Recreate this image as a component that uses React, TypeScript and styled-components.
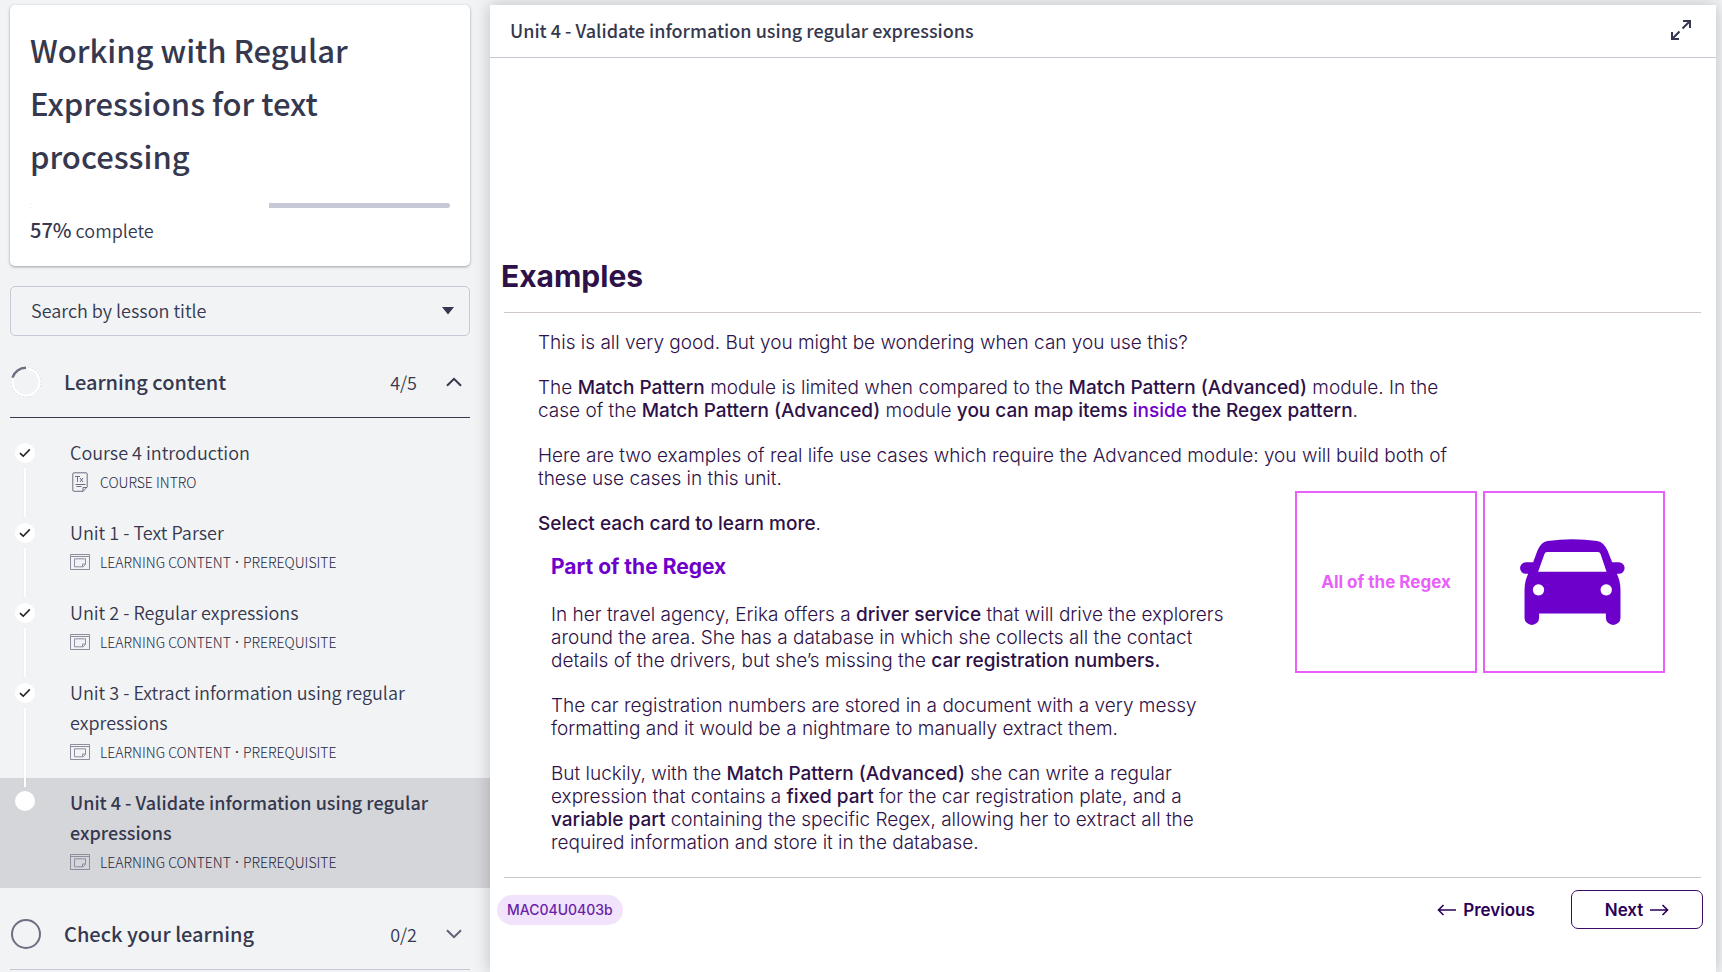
import React from "react";
import styled, { createGlobalStyle } from "styled-components";

const GlobalStyle = createGlobalStyle`
  *, *::before, *::after { box-sizing: border-box; }
  body {
    margin: 0;
    background: #f1f3f5;
    color: #35384e;
    font-family: "Noto Sans CJK SC", "Source Sans Pro", sans-serif;
  }
  h1, h2, h3, p, ul { margin: 0; padding: 0; }
  button { font: inherit; color: inherit; background: none; border: 0; padding: 0; cursor: pointer; }
`;

const Page = styled.div`
  display: grid;
  grid-template-columns: 490px minmax(0, 1fr);
  min-height: 100vh;
  padding: 5px 6px 0 0;
  overflow: hidden;
`;

const Sidebar = styled.nav`
  min-width: 0;
`;

const CourseCard = styled.section`
  margin: 0 20px 20px 10px;
  padding: 18px 20px 21px;
  background: #fff;
  border-radius: 5px;
  box-shadow: 0 1px 3px rgba(0, 0, 0, 0.35);
`;

const CourseTitle = styled.h1`
  font-size: 31px;
  line-height: 53px;
  font-weight: 500;
`;

const Track = styled.div`
  height: 5px;
  margin: 21px 0 7px;
  border-radius: 3px;
  background: #c7cad6;
  overflow: hidden;
`;

const Fill = styled.div`
  height: 100%;
  background: #fff;
`;

const Complete = styled.p`
  font-size: 18px;
  line-height: 30px;
  font-weight: 350;

  strong { font-size: 20px; font-weight: 500; }
`;

const SearchField = styled.div`
  display: grid;
  align-items: center;
  margin: 0 20px 10px 10px;

  > * { grid-area: 1 / 1; }
  svg { justify-self: end; margin-right: 16px; pointer-events: none; }
`;

const SearchSelect = styled.select`
  appearance: none;
  width: 100%;
  height: 50px;
  padding: 0 40px 3px 20px;
  border: 1px solid #c7cad6;
  border-radius: 5px;
  background: transparent;
  color: #35384e;
  font-family: inherit;
  font-size: 18px;
  font-weight: 350;
`;

const SectionHeader = styled.button<{ $open?: boolean }>`
  display: flex;
  align-items: center;
  width: calc(100% - 30px);
  height: 72px;
  margin: 0 20px 0 10px;
  padding-right: 8px;
  border-bottom: 1px solid ${(p) => (p.$open ? "#35384e" : "#c3cad6")};
  text-align: left;
`;

const SectionName = styled.span`
  flex: 1;
  margin-left: 22px;
  font-size: 20px;
  line-height: 30px;
  font-weight: 500;
`;

const SectionCount = styled.span`
  margin-right: 29px;
  font-size: 18px;
  line-height: 30px;
  font-weight: 350;
`;

const Lessons = styled.ul`
  list-style: none;
  padding: 10px 0;
`;

const Lesson = styled.li<{ $current?: boolean }>`
  display: flex;
  background: ${(p) => (p.$current ? "#d5d6da" : "transparent")};
`;

const Rail = styled.div<{ $current?: boolean }>`
  display: flex;
  flex-direction: column;
  align-items: center;
  gap: 5px;
  width: 50px;
  padding-top: ${(p) => (p.$current ? 13 : 15)}px;
`;

const Dot = styled.span`
  display: grid;
  place-items: center;
  flex: none;
  width: 20px;
  height: 20px;
  border-radius: 50%;
  background: #fff;
`;

const Connector = styled.span`
  flex: 1;
  width: 2px;
  margin-bottom: -9px;
  background: #fff;
  box-shadow: 0 0 1px rgba(53, 56, 78, 0.2);
`;

const LessonLink = styled.a`
  flex: 1;
  padding: 9px 50px 11px 20px;
  color: #35384e;
  text-decoration: none;
`;

const LessonTitle = styled.span<{ $current?: boolean }>`
  display: block;
  font-size: 18px;
  line-height: 30px;
  font-weight: ${(p) => (p.$current ? 500 : 350)};
`;

const Meta = styled.span`
  display: flex;
  align-items: center;
  font-size: 14px;
  line-height: 30px;
  font-weight: 300;
  color: #23263c;

  svg { width: 20px; margin-right: 10px; }
`;

const Separator = styled.span`
  width: 12px;
  font-family: Roboto, sans-serif;
  font-weight: 500;
  text-align: center;
`;

const Main = styled.main`
  min-width: 0;
  background: #fff;
  box-shadow: 0 0 16px rgba(0, 0, 0, 0.22);
`;

const TopBar = styled.header`
  display: flex;
  align-items: center;
  justify-content: space-between;
  height: 53px;
  padding: 0 25px 2px 20px;
  border-bottom: 1px solid #c7c8d2;
`;

const TopTitle = styled.h2`
  font-size: 18px;
  line-height: 30px;
  font-weight: 500;
`;

const IconButton = styled.button`
  display: flex;
`;

const Slide = styled.article`
  padding: 198px 13px 40px 7px;
  font-family: Inter, sans-serif;
  color: #2d1148;
`;

const SlideTitle = styled.h2`
  padding: 0 0 16px 4px;
  font-size: 30px;
  line-height: 40px;
  font-weight: 700;
`;

const Rule = styled.hr`
  height: 1px;
  margin: 0 2px 0 7px;
  border: 0;
  background: #cfc6cb;
`;

const Body = styled.div`
  padding: 18px 38px 23px 41px;
  font-size: 19px;
  line-height: 23px;
  font-weight: 280;

  p + p { margin-top: 22px; }
  strong { font-weight: 550; }
`;

const Intro = styled.div`
  max-width: 930px;
`;

const Split = styled.div`
  display: flex;
  align-items: flex-start;
  justify-content: space-between;
  gap: 12px;
`;

const Story = styled.section`
  max-width: 703px;
  padding-top: 22px;
`;

const Detail = styled.div`
  padding-left: 13px;
`;

const DetailTitle = styled.h3`
  margin: 18px 0 22px;
  font-size: 21px;
  line-height: 28px;
  font-weight: 700;
  color: #6e00cc;
`;

const Accent = styled.span`
  color: #6e00cc;
`;

const Cards = styled.div`
  display: flex;
  gap: 6px;
  padding-top: 1px;
`;

const FlipCard = styled.button`
  display: grid;
  place-items: center;
  width: 182px;
  height: 182px;
  border: 2px solid #e95ffa;
  color: #e95ffa;
  font-size: 17px;
  font-weight: 700;
`;

const Footer = styled.footer`
  display: flex;
  align-items: center;
  padding-top: 12px;
`;

const Code = styled.span`
  margin-right: auto;
  padding: 0 10px;
  border-radius: 15px;
  background: #f0e3fb;
  color: #6a1fa8;
  font-size: 14px;
  line-height: 30px;
  font-weight: 500;
`;

const NavButton = styled.button<{ $outlined?: boolean }>`
  display: flex;
  align-items: center;
  justify-content: center;
  gap: 7px;
  height: 39px;
  min-width: 132px;
  border: 1px solid ${(p) => (p.$outlined ? "#3b0a66" : "transparent")};
  border-radius: 7px;
  color: #2b0057;
  font-size: 17px;
  font-weight: 600;

  & + & { margin-left: 19px; }
`;

const Check = () => (
  <svg width="12" height="10" viewBox="0 0 12 10" fill="none" stroke="#222" strokeWidth="1.6">
    <path d="M1 5.2 4.2 8.2 10.8 1.4" />
  </svg>
);

const Chevron = ({ up }: { up?: boolean }) => (
  <svg width="16" height="10" viewBox="0 0 16 10" fill="none" stroke={up ? "#35384e" : "#5d6076"} strokeWidth="2">
    <path d={up ? "M1 8.8 8 1.8 15 8.8" : "M1 1.2 8 8.2 15 1.2"} />
  </svg>
);

const Ring = ({ started }: { started?: boolean }) => (
  <svg width="32" height="32" viewBox="0 0 32 32" fill="none" strokeWidth="2">
    {started ? (
      <>
        <circle cx="16" cy="16" r="14.6" stroke="#a9abb8" strokeWidth="0.8" strokeDasharray="2 1.5" />
        <circle cx="16" cy="16" r="13.6" stroke="#fff" strokeWidth="2.4" />
        <path d="M2.5 11.6A14.2 14.2 0 0 1 16 1.8" stroke="#6c6f82" strokeWidth="2.4" />
      </>
    ) : (
      <circle cx="16" cy="16" r="14" stroke="#6c6f82" />
    )}
  </svg>
);

const TextDocIcon = () => (
  <svg height="20" viewBox="0 0 20 20" fill="none" stroke="#6c6f82">
    <path d="M4 .8h12a1.2 1.2 0 0 1 1.2 1.2v13L13 19.3H4A1.2 1.2 0 0 1 2.8 18V2A1.2 1.2 0 0 1 4 .8Z" />
    <path d="M17 15.500h-4v4M5 4.500h5M7.500 4.500V10M10 6l3 4M13 6l-3 4M5.500 12.500h10M6.500 14.500h5" />
  </svg>
);

const WindowIcon = () => (
  <svg height="16" viewBox="0 0 20 16" fill="none" stroke="#8b8e9d">
    <path d="M.5.5h19v15H.5ZM.5 2.500h19M15.500 10.500V4.800H4.500v8H13ZM12.500 12.500v-2.500h3" />
  </svg>
);

const Arrow = ({ left }: { left?: boolean }) => (
  <svg width="19" height="12" viewBox="0 0 19 12" fill="none" stroke="#2b0057" strokeWidth="1.6">
    <path d={left ? "M19 6H1.500M6.500 1 1.500 6l5 5" : "M0 6h17.500M12.500 1l5 5-5 5"} />
  </svg>
);

const Expand = () => (
  <svg width="20" height="20" viewBox="0 0 20 20" fill="none" stroke="#35384e" strokeWidth="2">
    <path d="M12 1h7v7M19 1l-7.500 7.500M8 19H1v-7M1 19l7.500-7.500" />
  </svg>
);

const Car = () => (
  <svg width="108" height="86" viewBox="780 207 324 259" fill="#6e00cc">
    <path
      fillRule="evenodd"
      d="M797 277h22L832 242Q842 217 862 213Q937 202 1012 213Q1032 217 1043 242L1057 277h20a17 17 0 0 1 0 35h-6Q1082 334 1082 360V444a22 22 0 0 1-44 0V431H837v13a22 22 0 0 1-44 0V360Q793 334 804 312h-7a17 17 0 0 1 0-35ZM861 246Q855 246 853 252L834 306H1040L1022 252Q1020 246 1014 246ZM835 343a17 17 0 1 0 .1 0ZM1039 343a17 17 0 1 0 .1 0Z"
    />
  </svg>
);

type LessonItem = { title: string; tags: string[]; doc?: boolean; current?: boolean };

const lessons: LessonItem[] = [
  { title: "Course 4 introduction", tags: ["COURSE INTRO"], doc: true },
  { title: "Unit 1 - Text Parser", tags: ["LEARNING CONTENT", "PREREQUISITE"] },
  { title: "Unit 2 - Regular expressions", tags: ["LEARNING CONTENT", "PREREQUISITE"] },
  { title: "Unit 3 - Extract information using regular expressions", tags: ["LEARNING CONTENT", "PREREQUISITE"] },
  {
    title: "Unit 4 - Validate information using regular expressions",
    tags: ["LEARNING CONTENT", "PREREQUISITE"],
    current: true,
  },
];

const progress = 57;

export default function App() {
  return (
    <>
      <GlobalStyle />
      <Page>
        <Sidebar aria-label="Course">
          <CourseCard>
            <CourseTitle>Working with Regular Expressions for text processing</CourseTitle>
            <Track role="progressbar" aria-valuenow={progress} aria-label="Course progress">
              <Fill style={{ width: `${progress}%` }} />
            </Track>
            <Complete>
              <strong>{progress}%</strong> complete
            </Complete>
          </CourseCard>
          <SearchField>
            <SearchSelect aria-label="Search by lesson title" defaultValue="">
              <option value="">Search by lesson title</option>
              {lessons.map((l) => (
                <option key={l.title}>{l.title}</option>
              ))}
            </SearchSelect>
            <svg width="12" height="8" viewBox="0 0 12 8" fill="#35384e">
              <path d="M0 0h12L6 7.500Z" />
            </svg>
          </SearchField>

          <SectionHeader $open aria-expanded="true">
            <Ring started />
            <SectionName>Learning content</SectionName>
            <SectionCount>4/5</SectionCount>
            <Chevron up />
          </SectionHeader>
          <Lessons>
            {lessons.map((l) => (
              <Lesson key={l.title} $current={l.current}>
                <Rail $current={l.current}>
                  <Dot>{!l.current && <Check />}</Dot>
                  {!l.current && <Connector />}
                </Rail>
                <LessonLink href="#" aria-current={l.current ? "page" : undefined}>
                  <LessonTitle $current={l.current}>{l.title}</LessonTitle>
                  <Meta>
                    {l.doc ? <TextDocIcon /> : <WindowIcon />}
                    {l.tags.map((tag, i) => (
                      <React.Fragment key={tag}>
                        {i > 0 && <Separator>·</Separator>}
                        <span>{tag}</span>
                      </React.Fragment>
                    ))}
                  </Meta>
                </LessonLink>
              </Lesson>
            ))}
          </Lessons>
          <SectionHeader aria-expanded="false">
            <Ring />
            <SectionName>Check your learning</SectionName>
            <SectionCount>0/2</SectionCount>
            <Chevron />
          </SectionHeader>
        </Sidebar>

        <Main>
          <TopBar>
            <TopTitle>Unit 4 - Validate information using regular expressions</TopTitle>
            <IconButton aria-label="Full screen">
              <Expand />
            </IconButton>
          </TopBar>
          <Slide>
            <SlideTitle>Examples</SlideTitle>
            <Rule />
            <Body>
              <Intro>
                <p>This is all very good. But you might be wondering when can you use this?</p>
                <p>
                  The <strong>Match Pattern</strong> module is limited when compared to the{" "}
                  <strong>Match Pattern (Advanced)</strong> module. In the case of the{" "}
                  <strong>Match Pattern (Advanced)</strong> module{" "}
                  <strong>
                    you can map items <Accent>inside</Accent> the Regex pattern
                  </strong>
                  .
                </p>
                <p>
                  Here are two examples of real life use cases which require the Advanced module: you will build both
                  of these use cases in this unit.
                </p>
              </Intro>
              <Split>
                <Story>
                  <p>
                    <strong>Select each card to learn more</strong>.
                  </p>
                  <Detail>
                    <DetailTitle>Part of the Regex</DetailTitle>
                    <p>
                      In her travel agency, Erika offers a <strong>driver service</strong> that will drive the
                      explorers around the area. She has a database in which she collects all the contact details of
                      the drivers, but she’s missing the <strong>car registration numbers.</strong>
                    </p>
                    <p>
                      The car registration numbers are stored in a document with a very messy formatting and it would
                      be a nightmare to manually extract them.
                    </p>
                    <p>
                      But luckily, with the <strong>Match Pattern (Advanced)</strong> she can write a regular
                      expression that contains a <strong>fixed part</strong> for the car registration plate, and a{" "}
                      <strong>variable part</strong> containing the specific Regex, allowing her to extract all the
                      required information and store it in the database.
                    </p>
                  </Detail>
                </Story>
                <Cards>
                  <FlipCard>All of the Regex</FlipCard>
                  <FlipCard aria-label="Part of the Regex">
                    <Car />
                  </FlipCard>
                </Cards>
              </Split>
            </Body>
            <Rule />
            <Footer>
              <Code>MAC04U0403b</Code>
              <NavButton>
                <Arrow left />
                Previous
              </NavButton>
              <NavButton $outlined>
                Next
                <Arrow />
              </NavButton>
            </Footer>
          </Slide>
        </Main>
      </Page>
    </>
  );
}
